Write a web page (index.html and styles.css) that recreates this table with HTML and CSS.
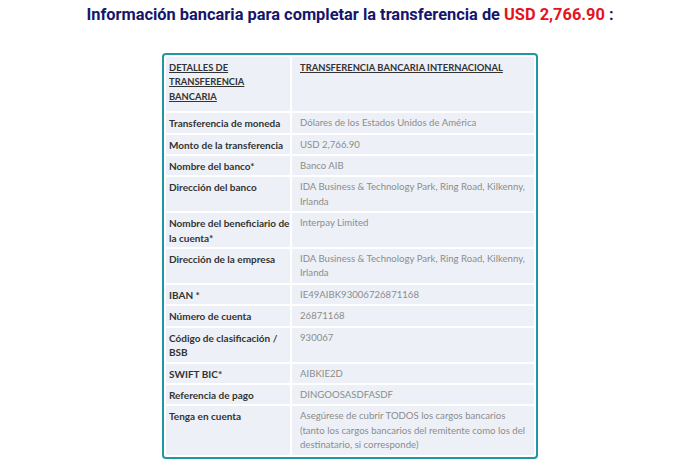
FILE: index.html
```html
<!DOCTYPE html>
<html lang="es">
<head>
<meta charset="utf-8">
<title>Información bancaria</title>
<link rel="stylesheet" href="styles.css">
</head>
<body>
<h1 class="title">Información bancaria para completar la transferencia de <span class="amount">USD 2,766.90</span> :</h1>
<div class="card">
  <table class="bank">
    <thead>
      <tr>
        <th class="c1">DETALLES DE TRANSFERENCIA BANCARIA</th>
        <th class="c2">TRANSFERENCIA BANCARIA INTERNACIONAL</th>
      </tr>
    </thead>
    <tbody>
      <tr><td class="c1">Transferencia de moneda</td><td class="c2">Dólares de los Estados Unidos de América</td></tr>
      <tr><td class="c1">Monto de la transferencia</td><td class="c2">USD 2,766.90</td></tr>
      <tr><td class="c1">Nombre del banco*</td><td class="c2">Banco AIB</td></tr>
      <tr><td class="c1">Dirección del banco</td><td class="c2">IDA Business &amp; Technology Park, Ring Road, Kilkenny, Irlanda</td></tr>
      <tr><td class="c1">Nombre del beneficiario de la cuenta*</td><td class="c2">Interpay Limited</td></tr>
      <tr><td class="c1">Dirección de la empresa</td><td class="c2">IDA Business &amp; Technology Park, Ring Road, Kilkenny, Irlanda</td></tr>
      <tr><td class="c1">IBAN *</td><td class="c2">IE49AIBK93006726871168</td></tr>
      <tr><td class="c1">Número de cuenta</td><td class="c2">26871168</td></tr>
      <tr><td class="c1">Código de clasificación / BSB</td><td class="c2">930067</td></tr>
      <tr><td class="c1">SWIFT BIC*</td><td class="c2">AIBKIE2D</td></tr>
      <tr><td class="c1">Referencia de pago</td><td class="c2">DINGOOSASDFASDF</td></tr>
      <tr><td class="c1">Tenga en cuenta</td><td class="c2">Asegúrese de cubrir TODOS los cargos bancarios (tanto los cargos bancarios del remitente como los del destinatario, si corresponde)</td></tr>
    </tbody>
  </table>
</div>
</body>
</html>
```
FILE: styles.css
```css
html, body {
  margin: 0;
  padding: 0;
  background: #ffffff;
}
body {
  font-family: Roboto, "Liberation Sans", sans-serif;
}
.title {
  margin: 0 0 23px 0;
  height: 30px;
  line-height: 30px;
  text-align: center;
  font-size: 16.4px;
  font-weight: 700;
  color: #15166b;
}
.amount {
  color: #e4131d;
}
.card {
  box-sizing: border-box;
  width: 376px;
  margin: 0 auto;
  border: 2px solid #2196a4;
  border-radius: 4px;
  background: #ffffff;
}
.bank {
  border-collapse: separate;
  border-spacing: 2px;
  width: 100%;
  table-layout: fixed;
  font-family: Lato, "Liberation Sans", sans-serif;
  font-size: 10px;
  line-height: 14.4px;
}
.bank th, .bank td {
  background: #edf1f7;
  text-align: left;
  vertical-align: top;
  padding: 3px 3px 2px 3px;
}
.bank th {
  padding-top: 4px;
  padding-bottom: 7px;
  font-size: 9.4px;
  font-weight: 700;
  color: #333333;
  text-decoration: underline;
}
.bank .c1 {
  width: 121px;
  padding-right: 0;
}
.bank td.c1 {
  font-weight: 700;
  color: #333333;
}
.bank .c2 {
  padding-left: 8px;
}
.bank td.c2 {
  font-size: 9.6px;
  color: #8c8c8c;
  font-weight: 400;
}
```
